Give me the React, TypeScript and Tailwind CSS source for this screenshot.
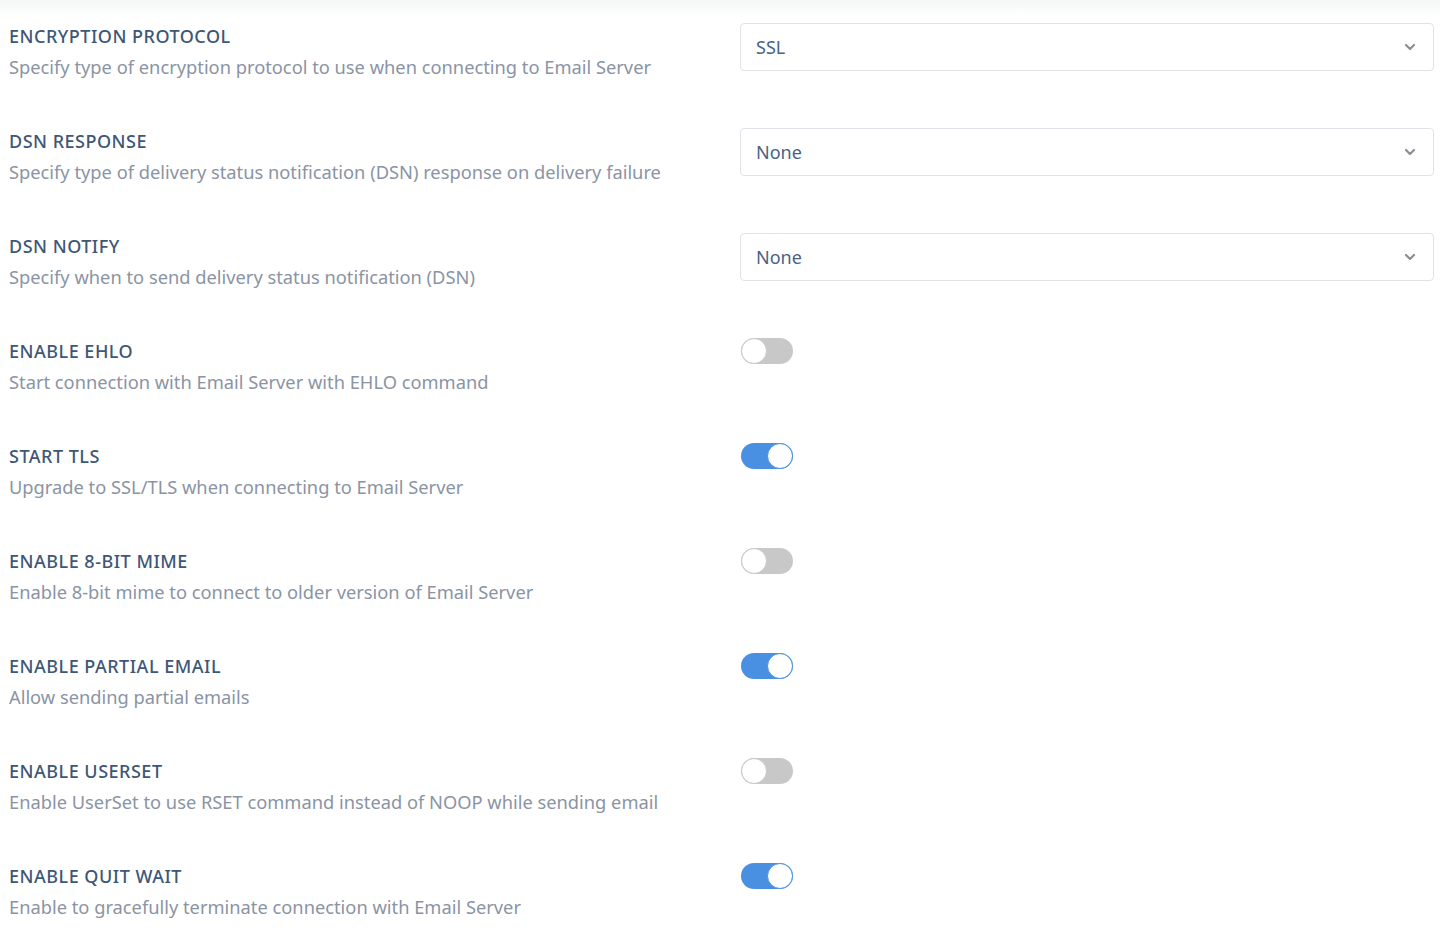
import React from "react";

type Row =
  | { title: string; desc: string; kind: "select"; value: string }
  | { title: string; desc: string; kind: "toggle"; on: boolean };

const rows: Row[] = [
  { title: "ENCRYPTION PROTOCOL", desc: "Specify type of encryption protocol to use when connecting to Email Server", kind: "select", value: "SSL" },
  { title: "DSN RESPONSE", desc: "Specify type of delivery status notification (DSN) response on delivery failure", kind: "select", value: "None" },
  { title: "DSN NOTIFY", desc: "Specify when to send delivery status notification (DSN)", kind: "select", value: "None" },
  { title: "ENABLE EHLO", desc: "Start connection with Email Server with EHLO command", kind: "toggle", on: false },
  { title: "START TLS", desc: "Upgrade to SSL/TLS when connecting to Email Server", kind: "toggle", on: true },
  { title: "ENABLE 8-BIT MIME", desc: "Enable 8-bit mime to connect to older version of Email Server", kind: "toggle", on: false },
  { title: "ENABLE PARTIAL EMAIL", desc: "Allow sending partial emails", kind: "toggle", on: true },
  { title: "ENABLE USERSET", desc: "Enable UserSet to use RSET command instead of NOOP while sending email", kind: "toggle", on: false },
  { title: "ENABLE QUIT WAIT", desc: "Enable to gracefully terminate connection with Email Server", kind: "toggle", on: true },
];

function Toggle({ on }: { on: boolean }) {
  return (
    <div
      className={
        "relative w-[52px] h-[26px] rounded-full " +
        (on ? "bg-[#4a90e2]" : "bg-[#c8c8c8]")
      }
    >
      <div
        className={
          "absolute top-0 w-[26px] h-[26px] rounded-full bg-white border " +
          (on ? "right-0 border-[#4a90e2]" : "left-0 border-[#c8c8c8]")
        }
      />
    </div>
  );
}

function Select({ value }: { value: string }) {
  return (
    <div className="h-[48px] w-full rounded-[4px] border border-[#dfe3e8] bg-white flex items-center justify-between pl-[15px] pr-[17px]">
      <span className="text-[18px] text-[#4b6283]">{value}</span>
      <svg width="12" height="8" viewBox="0 0 12 8" className="text-[#8a8f96]">
        <path d="M2 2 L6 6 L10 2" fill="none" stroke="currentColor" strokeWidth="2.2" strokeLinecap="round" strokeLinejoin="round" />
      </svg>
    </div>
  );
}

export default function App() {
  return (
    <div
      className="relative w-[1440px] h-[936px] bg-white overflow-hidden"
      style={{ fontFamily: '"Noto Sans", "Open Sans", sans-serif' }}
    >
      <div className="absolute top-0 left-0 right-0 h-[16px] bg-gradient-to-b from-[#f5f6f6] to-white" />
      <div className="relative flex flex-col pt-[23px] pl-[9px] pr-[6px]">
        {rows.map((r) => (
          <div key={r.title} className="flex h-[105px]">
            <div className="w-[731px] flex flex-col">
              <div className="h-[26px] leading-[26px] text-[18px] font-medium tracking-[0.5px] text-[#3d5777]">
                {r.title}
              </div>
              <div className="mt-[5px] h-[26px] leading-[26px] text-[18.3px] text-[#8a94a4]">
                {r.desc}
              </div>
            </div>
            <div className="flex-1">
              {r.kind === "select" ? <Select value={r.value} /> : <div className="pl-[1px]"><Toggle on={r.on} /></div>}
            </div>
          </div>
        ))}
      </div>
    </div>
  );
}
